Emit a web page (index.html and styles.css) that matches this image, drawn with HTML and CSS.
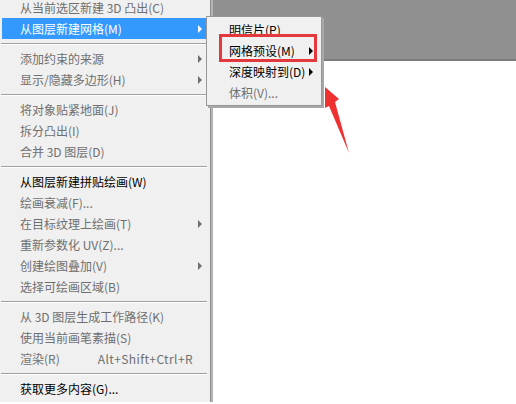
FILE: index.html
```html
<!DOCTYPE html>
<html lang="zh-CN">
<head>
    <meta charset="UTF-8">
    <title>3D 菜单</title>
    <link rel="stylesheet" href="styles.css">
</head>
<body>
    <div class="screen">
        <div class="menu">
            <div class="item disabled">从当前选区新建 3D 凸出(C)</div>
            <div class="item active has-sub">从图层新建网格(M)</div>
            <div class="sep"></div>
            <div class="item disabled has-sub">添加约束的来源</div>
            <div class="item disabled has-sub">显示/隐藏多边形(H)</div>
            <div class="sep"></div>
            <div class="item disabled">将对象贴紧地面(J)</div>
            <div class="item disabled">拆分凸出(I)</div>
            <div class="item disabled">合并 3D 图层(D)</div>
            <div class="sep"></div>
            <div class="item">从图层新建拼贴绘画(W)</div>
            <div class="item disabled">绘画衰减(F)...</div>
            <div class="item disabled has-sub">在目标纹理上绘画(T)</div>
            <div class="item disabled">重新参数化 UV(Z)...</div>
            <div class="item disabled has-sub">创建绘图叠加(V)</div>
            <div class="item disabled">选择可绘画区域(B)</div>
            <div class="sep"></div>
            <div class="item disabled">从 3D 图层生成工作路径(K)</div>
            <div class="item disabled">使用当前画笔素描(S)</div>
            <div class="item disabled"><span>渲染(R)</span><span class="shortcut">Alt+Shift+Ctrl+R</span></div>
            <div class="sep"></div>
            <div class="item">获取更多内容(G)...</div>
        </div>

        <div class="canvas">
            <div class="canvas-bar"></div>
        </div>

        <div class="submenu">
            <div class="item">明信片(P)</div>
            <div class="item has-sub">网格预设(M)</div>
            <div class="item has-sub">深度映射到(D)</div>
            <div class="item disabled">体积(V)...</div>
        </div>

        <div class="mark"></div>

        <svg class="pointer" width="516" height="404" viewBox="0 0 516 404">
            <polygon points="325,87 339,99 335,102 349,153 329,106 325,108" fill="#ef3131"/>
        </svg>
    </div>
</body>
</html>
```

FILE: styles.css
```css
* {
    margin: 0;
    padding: 0;
    box-sizing: border-box;
}

body {
    font-family: "Noto Sans CJK SC", "Liberation Sans", sans-serif;
    font-size: 12px;
    background-color: #ffffff;
}

.screen {
    position: relative;
    display: flex;
    width: 516px;
    height: 404px;
    overflow: hidden;
}

.menu {
    width: 211px;
    height: 405px;
    margin-top: -3px;
    background-color: #f0f0f0;
    border-right: 1px solid #8d8d8d;
    box-shadow: 2px 0 0 #b4b4b4;
    z-index: 1;
}

.item {
    position: relative;
    display: flex;
    height: 21px;
    line-height: 21px;
    padding-left: 20px;
    color: #000000;
    white-space: nowrap;
}

.item.disabled {
    color: #6f6f6f;
}

.item.active {
    background-color: #3399ff;
    color: #ffffff;
    margin: 0 3px 0 2px;
    padding-left: 18px;
}

.item.has-sub::after {
    content: "";
    position: absolute;
    left: 198px;
    top: 7px;
    border-left: 4px solid #6f6f6f;
    border-top: 4px solid transparent;
    border-bottom: 4px solid transparent;
}

.menu .item.active::after {
    left: 196px;
    border-left-color: #ffffff;
}

.shortcut {
    margin-left: auto;
    margin-right: 17px;
    letter-spacing: 0.4px;
}

.sep {
    height: 2px;
    margin: 4px 3px 3px 1px;
    border-top: 1px solid #a0a0a0;
    border-bottom: 1px solid #ffffff;
}

.canvas {
    flex: 1;
    margin-left: 2px;
    background-color: #ffffff;
}

.canvas-bar {
    height: 61px;
    background-color: #909090;
    border-bottom: 2px solid #7b7b7b;
}

.submenu {
    position: absolute;
    left: 206px;
    top: 16px;
    width: 116px;
    padding: 2px 0;
    background-color: #f0f0f0;
    border: 1px solid #979797;
    box-shadow: 2px 2px 0 #a8a8a8;
    z-index: 2;
}

.submenu .item {
    padding-left: 22px;
}

.submenu .item.has-sub::after {
    left: 102px;
    border-left-color: #000000;
}

.mark {
    position: absolute;
    left: 219px;
    top: 34px;
    width: 98px;
    height: 28px;
    border: 3px solid #e5383d;
    z-index: 3;
}

.pointer {
    position: absolute;
    left: 0;
    top: 0;
    pointer-events: none;
    z-index: 4;
}
```
